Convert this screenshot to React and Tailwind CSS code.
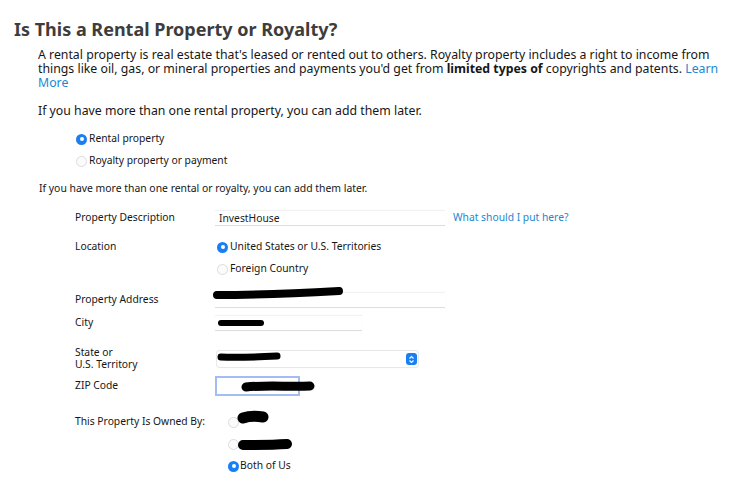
import React from "react";

function Radio({ checked }) {
  return checked ? (
    <span className="inline-flex h-[11px] w-[11px] shrink-0 items-center justify-center rounded-full bg-[#1a7ff3]">
      <span className="h-[4px] w-[4px] rounded-full bg-white" />
    </span>
  ) : (
    <span className="inline-block h-[11px] w-[11px] shrink-0 rounded-full border border-[#dcdcdc] bg-[#fbfbfb]" />
  );
}

function RadioRow({ checked, children }) {
  return (
    <div className="flex h-[18px] items-center gap-[2px]">
      <Radio checked={checked} />
      <span>{children}</span>
    </div>
  );
}

function Scribble({ className, d, w, h, sw = 8 }) {
  return (
    <svg
      className={"pointer-events-none absolute " + className}
      width={w}
      height={h}
      viewBox={`0 0 ${w} ${h}`}
    >
      <path d={d} stroke="#000" strokeWidth={sw} strokeLinecap="round" strokeLinejoin="round" fill="none" />
    </svg>
  );
}

function TextInput({ width, children, className = "" }) {
  return (
    <div
      className={
        "relative h-[16px] border-t border-t-[#f2f2f2] border-b border-b-[#dedede] bg-white shadow-[0_0_1px_rgba(0,0,0,0.06)] " +
        className
      }
      style={{ width }}
    >
      {children}
    </div>
  );
}

export default function App() {
  return (
    <div className="h-[488px] w-[740px] overflow-hidden bg-white pl-[14px] pt-[17px] font-['Noto_Sans',sans-serif] text-[#161616]">
      <h1 className="text-[18px] font-bold leading-[24px] text-[#3d3d3d]">
        Is This a Rental Property or Royalty?
      </h1>
      <p className="ml-[24px] mt-[7px] whitespace-nowrap text-[12.3px] leading-[14px]">
        A rental property is real estate that's leased or rented out to others. Royalty property includes a right to income from
        <br />
        things like oil, gas, or mineral properties and payments you'd get from <b>limited types of</b> copyrights and patents.{" "}
        <span className="text-[#2088d2]">
          Learn
          <br />
          More
        </span>
      </p>
      <p className="ml-[24px] mt-[14px] text-[12.3px] leading-[14px]">
        If you have more than one rental property, you can add them later.
      </p>
      <div className="ml-[62px] mt-[12px] flex flex-col gap-[4px] text-[10.3px]">
        <RadioRow checked>Rental property</RadioRow>
        <RadioRow>Royalty property or payment</RadioRow>
      </div>
      <p className="ml-[25px] mt-[11px] text-[10.4px] leading-[14px]">
        If you have more than one rental or royalty, you can add them later.
      </p>

      <div className="ml-[61px] mt-[14px] text-[10.3px]">
        {/* Property Description */}
        <div className="flex h-[18px] items-center">
          <div className="w-[140px]">Property Description</div>
          <TextInput width={230}>
            <span className="absolute left-[4px] top-[-1px] leading-[16px] text-[#222]">InvestHouse</span>
          </TextInput>
          <span className="ml-[8px] text-[#2088d2]">What should I put here?</span>
        </div>

        {/* Location */}
        <div className="mt-[11px] flex">
          <div className="flex h-[18px] w-[142px] items-center">Location</div>
          <div className="flex flex-col gap-[4px]">
            <RadioRow checked>United States or U.S. Territories</RadioRow>
            <RadioRow>Foreign Country</RadioRow>
          </div>
        </div>

        {/* Property Address */}
        <div className="mt-[13px] flex h-[18px] items-center">
          <div className="w-[140px]">Property Address</div>
          <TextInput width={230}>
            <Scribble
              className="left-[-3px] top-[-6px]"
              w={132}
              h={14}
              sw={8}
              d="M5 8 C 40 8, 90 6, 127 4"
            />
          </TextInput>
        </div>

        {/* City */}
        <div className="mt-[5px] flex h-[18px] items-center">
          <div className="w-[140px]">City</div>
          <TextInput width={147}>
            <Scribble className="left-[2px] top-[2px]" w={48} h={10} sw={6} d="M4 5 C 15 5, 30 5, 44 5" />
          </TextInput>
        </div>

        {/* State */}
        <div className="mt-[14px] flex h-[24px]">
          <div className="w-[142px] leading-[12px]">
            State or
            <br />
            U.S. Territory
          </div>
          <div className="relative mt-[5px] flex h-[16px] w-[201px] items-center justify-end rounded-[3px] bg-white pr-[1px] shadow-[0_0_0_1px_#e8e8e8,0_1px_1px_rgba(0,0,0,0.08)]">
            <Scribble className="left-[0px] top-[1px]" w={64} h={11} sw={7} d="M4 5 C 20 6, 40 5, 60 4" />
            <span className="flex h-[12px] w-[11px] flex-col items-center justify-center rounded-[3px] bg-[#1a7ff3]">
              <svg width="7" height="9" viewBox="0 0 7 9">
                <path d="M1.5 3.5 L3.5 1.5 L5.5 3.5 M1.5 5.5 L3.5 7.5 L5.5 5.5" stroke="#fff" strokeWidth="1.1" fill="none" />
              </svg>
            </span>
          </div>
        </div>

        {/* ZIP */}
        <div className="mt-[6px] flex h-[20px] items-center">
          <div className="w-[140px]">ZIP Code</div>
          <div className="relative h-[20px] w-[85px] border-[2px] border-[#a3bcf3] bg-white">
            <Scribble className="left-[24px] top-[2px]" w={74} h={13} sw={9} d="M5 7 C 25 5, 50 7, 69 6" />
          </div>
        </div>

        {/* Owned by */}
        <div className="mt-[17px] flex">
          <div className="flex h-[18px] w-[153px] items-center">This Property Is Owned By:</div>
          <div className="flex flex-col gap-[4px]">
            <div className="relative flex h-[18px] items-center">
              <Radio />
              <Scribble className="left-[9px] top-[-3px]" w={32} h={16} sw={11} d="M6 8 C 12 6, 20 6, 26 7" />
            </div>
            <div className="relative flex h-[18px] items-center">
              <Radio />
              <Scribble
                className="left-[9px] top-[1px]"
                w={58}
                h={16}
                sw={10}
                d="M6 9 C 20 9, 35 9, 50 8"
              />
            </div>
            <div className="flex h-[18px] items-center gap-[1px]">
              <Radio checked />
              <span>Both of Us</span>
            </div>
          </div>
        </div>
      </div>
    </div>
  );
}
